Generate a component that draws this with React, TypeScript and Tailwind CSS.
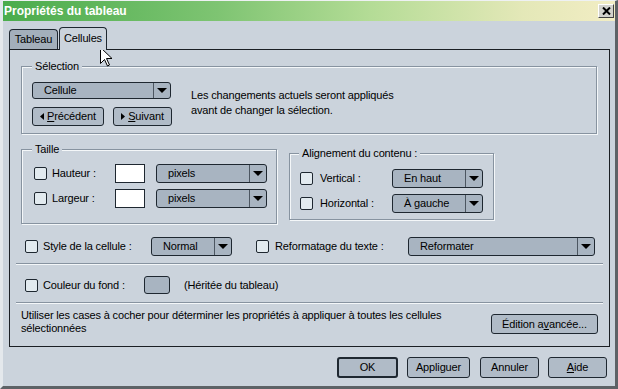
import React from "react";

function Arrow() {
  return (
    <svg width="10" height="5" viewBox="0 0 10 5">
      <path d="M0 0H10L5 5Z" fill="#000" />
    </svg>
  );
}

function Combo({ className, text }: { className: string; text: string }) {
  return (
    <div className={`flex rounded-[3px] border border-[#1e2730] bg-[#a8b4c1] ${className}`}>
      <div className="flex flex-1 items-center pl-[11px] leading-none">{text}</div>
      <div className="flex w-[17px] items-center justify-center border-l border-[#4c5661]">
        <Arrow />
      </div>
    </div>
  );
}

function Btn({ className, children }: { className: string; children: React.ReactNode }) {
  return (
    <div className={`flex items-center justify-center rounded-[3px] border-[#1e2730] bg-[#b0bbc7] leading-none ${className}`}>
      {children}
    </div>
  );
}

function Check() {
  return <div className="h-[13px] w-[13px] shrink-0 rounded-[2px] border border-[#1e2730] bg-[#e2eaef]" />;
}

export default function App() {
  return (
    <div className="relative h-[389px] w-[618px] overflow-hidden border-b-[3px] border-l-[3px] border-r-[3px] border-t border-b-[#5d6266] border-l-[#e4e8ec] border-r-[#5d6266] border-t-[#eef1f3] bg-[#cbd3dc] font-['Liberation_Sans',Arial,sans-serif] text-[11px] tracking-[-0.15px] text-black">
      {/* Title bar */}
      <div className="flex h-[20px] items-center justify-between bg-[linear-gradient(90deg,#4aac4c_0%,#7ec472_35%,#b4dc96_60%,#e4e8b8_85%,#f2edc4_100%)] pl-[1px] pr-[1px]">
        <span className="text-[12px] font-bold leading-none tracking-normal text-white">Propriétés du tableau</span>
        <div className="flex h-[14px] w-[16px] items-center justify-center border-b border-l border-r border-t border-b-[#404040] border-l-white border-r-[#404040] border-t-white bg-[#d2d2cc]">
          <svg width="9" height="8" viewBox="0 0 9 8">
            <path d="M1 0.5L8 7.5M8 0.5L1 7.5" stroke="#000" strokeWidth="2" />
          </svg>
        </div>
      </div>

      {/* Tabs */}
      <div className="ml-[6px] mt-[6px] flex h-[22px] items-end">
        <div className="flex h-[20px] w-[49px] items-center justify-center rounded-t-[4px] border border-b-0 border-[#1e2730] bg-[#a3afbb] leading-none">
          Tableau
        </div>
        <div className="relative z-10 -mb-px ml-px flex h-[23px] w-[48px] items-start justify-center rounded-t-[4px] border border-b-0 border-[#1e2730] bg-[#cbd3dc] pt-[5px] leading-none">
          Cellules
        </div>
      </div>

      {/* Panel */}
      <div className="ml-[6px] flex h-[298px] w-[601px] flex-col border border-[#1b1f24]">
        {/* Sélection */}
        <fieldset className="ml-[11px] mt-[10px] h-[74px] w-[576px] border border-[#8793a0] pl-[10px] shadow-[inset_1px_1px_0_#f4f7f9,1px_1px_0_#f4f7f9]">
          <legend className="bg-[#cbd3dc] px-[3px] leading-[13px]">Sélection</legend>
          <div className="mt-[9px] flex">
            <div className="flex flex-col">
              <Combo className="h-[17px] w-[139px]" text="Cellule" />
              <div className="mt-[8px] flex">
                <Btn className="h-[19px] w-[72px] border">
                  <svg width="4" height="7" viewBox="0 0 4 7" className="mr-[3px]">
                    <path d="M4 0V7L0 3.5Z" fill="#000" />
                  </svg>
                  <span><u>P</u>récédent</span>
                </Btn>
                <Btn className="ml-[9px] h-[19px] w-[59px] border">
                  <svg width="4" height="7" viewBox="0 0 4 7" className="mr-[3px]">
                    <path d="M0 0V7L4 3.5Z" fill="#000" />
                  </svg>
                  <span><u>S</u>uivant</span>
                </Btn>
              </div>
            </div>
            <div className="ml-[19px] mt-[6px] leading-[15px]">
              Les changements actuels seront appliqués
              <br />
              avant de changer la sélection.
            </div>
          </div>
        </fieldset>

        {/* Taille + Alignement */}
        <div className="mt-[9px] flex items-start">
          <fieldset className="ml-[11px] h-[81px] w-[256px] border border-[#8793a0] pl-[10px] shadow-[inset_1px_1px_0_#f4f7f9,1px_1px_0_#f4f7f9]">
            <legend className="bg-[#cbd3dc] px-[3px] leading-[13px]">Taille</legend>
            <div className="ml-[2px] mt-[8px] flex flex-col gap-[6px]">
              <div className="flex h-[19px] items-center">
                <Check />
                <span className="ml-[5px] w-[63px]">Hauteur :</span>
                <div className="h-[19px] w-[30px] border border-[#1e2730] bg-white" />
                <Combo className="ml-[11px] h-[19px] w-[111px]" text="pixels" />
              </div>
              <div className="flex h-[19px] items-center">
                <Check />
                <span className="ml-[5px] w-[63px]">Largeur :</span>
                <div className="h-[19px] w-[30px] border border-[#1e2730] bg-white" />
                <Combo className="ml-[11px] h-[19px] w-[111px]" text="pixels" />
              </div>
            </div>
          </fieldset>
          <fieldset className="ml-[12px] mt-[4px] h-[73px] w-[205px] border border-[#8793a0] pl-[9px] shadow-[inset_1px_1px_0_#f4f7f9,1px_1px_0_#f4f7f9]">
            <legend className="bg-[#cbd3dc] px-[3px] leading-[13px]">Alignement du contenu :</legend>
            <div className="ml-[1px] mt-[9px] flex flex-col gap-[6px]">
              <div className="flex h-[19px] items-center">
                <Check />
                <span className="ml-[7px] w-[72px]">Vertical :</span>
                <Combo className="h-[19px] w-[91px]" text="En haut" />
              </div>
              <div className="flex h-[19px] items-center">
                <Check />
                <span className="ml-[7px] w-[72px]">Horizontal :</span>
                <Combo className="h-[19px] w-[91px]" text="À gauche" />
              </div>
            </div>
          </fieldset>
        </div>

        {/* Style row */}
        <div className="ml-[15px] mt-[13px] flex h-[19px] items-center">
          <Check />
          <span className="ml-[5px] w-[108px]">Style de la cellule :</span>
          <Combo className="h-[19px] w-[81px]" text="Normal" />
          <div className="ml-[24px]">
            <Check />
          </div>
          <span className="ml-[6px] w-[133px]">Reformatage du texte :</span>
          <Combo className="h-[19px] w-[187px]" text="Reformater" />
        </div>

        {/* Separator */}
        <div className="ml-[6px] mr-[6px] mt-[7px] h-[2px] border-b border-t border-b-[#f4f7f9] border-t-[#8793a0]" />

        {/* Couleur row */}
        <div className="ml-[15px] mt-[11px] flex h-[18px] items-center">
          <Check />
          <span className="ml-[5px] w-[101px]">Couleur du fond :</span>
          <div className="h-[18px] w-[26px] rounded-[3px] border border-[#1e2730] bg-[#a8b4c1]" />
          <span className="ml-[14px]">(Héritée du tableau)</span>
        </div>

        {/* Separator */}
        <div className="ml-[6px] mr-[6px] mt-[8px] h-[2px] border-b border-t border-b-[#f4f7f9] border-t-[#8793a0]" />

        {/* Bottom info */}
        <div className="ml-[11px] mr-[11px] flex items-start justify-between">
          <div className="mt-[5px] leading-[13px]">
            Utiliser les cases à cocher pour déterminer les propriétés à appliquer à toutes les cellules
            <br />
            sélectionnées
          </div>
          <Btn className="mt-[10px] h-[20px] w-[107px] border">
            <span>Édition a<u>v</u>ancée...</span>
          </Btn>
        </div>
      </div>

      {/* Dialog buttons */}
      <div className="mt-[10px] flex">
        <Btn className="ml-[334px] h-[21px] w-[61px] border-2">OK</Btn>
        <Btn className="ml-[9px] h-[21px] w-[63px] border">
          <span>Appli<u>g</u>uer</span>
        </Btn>
        <Btn className="ml-[10px] h-[21px] w-[59px] border">Annuler</Btn>
        <Btn className="ml-[9px] h-[21px] w-[59px] border">
          <span><u>A</u>ide</span>
        </Btn>
      </div>

      {/* Mouse cursor */}
      <svg className="absolute left-[97px] top-[46px]" width="13" height="20" viewBox="0 0 13 20">
        <path d="M0.5 0.5V16.5L4.5 12.5L7.5 19L9.5 18L6.5 11.5H12Z" fill="#fff" stroke="#000" strokeWidth="1" strokeLinejoin="miter" />
      </svg>
    </div>
  );
}
